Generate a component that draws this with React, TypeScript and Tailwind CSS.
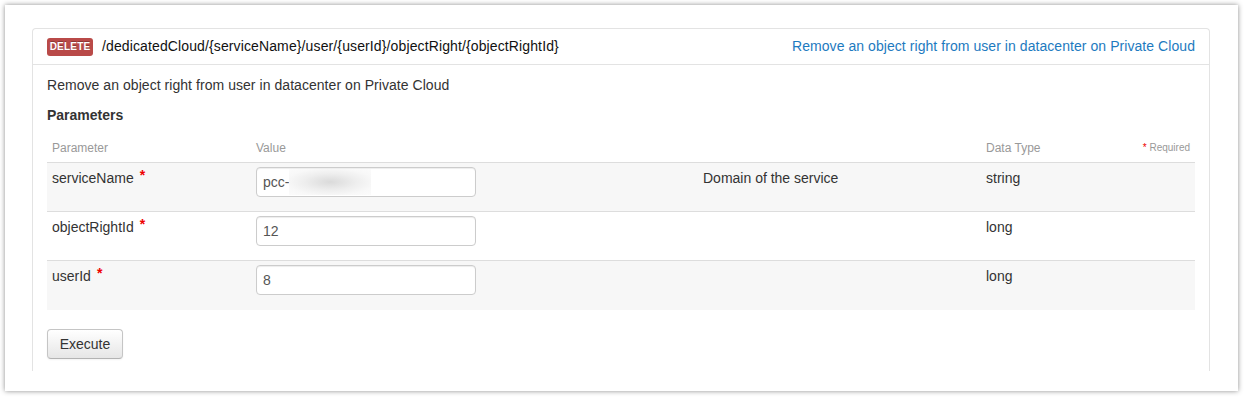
import React from "react";

const font = { fontFamily: '"Liberation Sans", Arial, Helvetica, sans-serif' };

function Star() {
  return <span className="relative top-[-3px] ml-[6px] font-bold text-[14px] text-[#e00]">*</span>;
}

type Row = { name: string; value: React.ReactNode; desc: string; type: string; striped: boolean };

export default function App() {
  const rows: Row[] = [
    {
      name: "serviceName",
      value: (
        <span className="flex items-center">
          <span>pcc-</span>
          <span className="inline-block w-[82px] h-[26px] bg-[radial-gradient(ellipse_at_center,#dadada_0%,#eeeeee_45%,#f8f8f8_75%,#fbfbfb_100%)]" />
        </span>
      ),
      desc: "Domain of the service",
      type: "string",
      striped: true,
    },
    { name: "objectRightId", value: "12", desc: "", type: "long", striped: false },
    { name: "userId", value: "8", desc: "", type: "long", striped: true },
  ];

  return (
    <div className="w-[1244px] h-[397px] bg-white pt-[5px] pl-[5px]" style={font}>
      <div className="w-[1233px] h-[386px] bg-white shadow-[0_0_5px_rgba(0,0,0,0.45)] pl-[27px] pr-[28px] pt-[23px]">
        <div className="h-[343px] border-l border-r border-t border-[#e3e3e3] rounded-t-[4px]">
          {/* header */}
          <div className="h-[36px] border-b border-[#e3e3e3] flex items-center justify-between pl-[14px] pr-[14px]">
            <div className="flex items-center">
              <span className="inline-flex items-center justify-center w-[46px] h-[18px] rounded-[3px] bg-[#b94a48] text-white text-[10px] font-bold tracking-[0.2px] [text-shadow:0_-1px_0_rgba(0,0,0,0.25)]">
                DELETE
              </span>
              <span className="ml-[9px] text-[14px] tracking-[0.12px] text-[#111]">
                /dedicatedCloud/{"{serviceName}"}/user/{"{userId}"}/objectRight/{"{objectRightId}"}
              </span>
            </div>
            <span className="text-[14px] tracking-[0.06px] text-[#1d7ac0]">Remove an object right from user in datacenter on Private Cloud</span>
          </div>

          {/* body */}
          <div className="pl-[14px] pr-[14px] pt-[10px]">
            <p className="text-[14px] leading-[20px] tracking-[0.05px] text-[#333]">Remove an object right from user in datacenter on Private Cloud</p>
            <h4 className="mt-[10px] text-[14px] leading-[20px] font-bold text-[#333]">Parameters</h4>

            <div className="mt-[8px] text-[#333]">
              <div className="flex h-[30px] items-center border-b border-[#ddd] text-[12px] text-[#999]">
                <div className="w-[204px] pl-[5px]">Parameter</div>
                <div className="w-[447px] pl-[5px]">Value</div>
                <div className="w-[283px] pl-[5px]"></div>
                <div className="flex-1 pl-[5px]">Data Type</div>
                <div className="pr-[5px] text-[10px]">
                  <span className="text-[#e00]">*</span> Required
                </div>
              </div>
              {rows.map((r, i) => (
                <div
                  key={r.name}
                  className={`flex h-[49px] ${i < rows.length - 1 ? "border-b border-[#ddd]" : ""} ${r.striped ? "bg-[#f7f7f7]" : "bg-white"} text-[14px] leading-[20px]`}
                >
                  <div className="w-[204px] pl-[5px] pt-[5px]">
                    {r.name}
                    <Star />
                  </div>
                  <div className="w-[447px] pl-[5px] pt-[4px]">
                    <div className="w-[220px] h-[30px] bg-white border border-[#ccc] rounded-[4px] shadow-[inset_0_1px_1px_rgba(0,0,0,0.075)] flex items-center pl-[6px] text-[14px] text-[#555]">
                      {r.value}
                    </div>
                  </div>
                  <div className="w-[283px] pl-[5px] pt-[5px]">{r.desc}</div>
                  <div className="flex-1 pl-[5px] pt-[5px]">{r.type}</div>
                </div>
              ))}
            </div>

            <button className="mt-[19px] w-[76px] h-[30px] rounded-[4px] border border-[#c5c5c5] border-b-[#b3b3b3] bg-[linear-gradient(#ffffff,#e6e6e6)] shadow-[inset_0_1px_0_rgba(255,255,255,0.2),0_1px_2px_rgba(0,0,0,0.05)] text-[14px] text-[#333]">
              Execute
            </button>
          </div>
        </div>
      </div>
    </div>
  );
}
